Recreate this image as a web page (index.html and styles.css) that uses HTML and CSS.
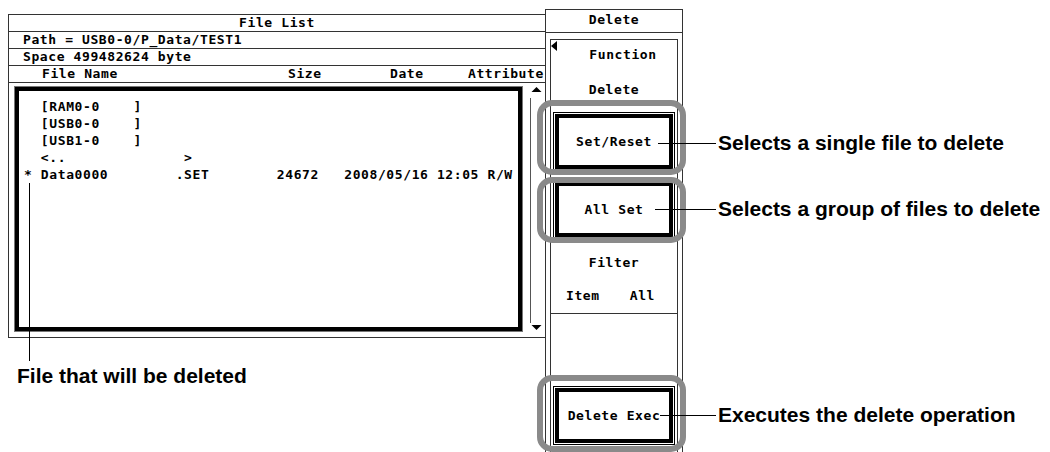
FILE: index.html
```html
<!DOCTYPE html>
<html>

<head>
    <link rel="stylesheet" href="styles.css">
</head>

<body>

    <div class="screen">

        <div class="file-panel">
            <div class="row row-title">File List</div>
            <div class="row row-info">Path = USB0-0/P_Data/TEST1</div>
            <div class="row row-info">Space 499482624 byte</div>
            <div class="row row-head">
                <span class="c-name">File Name</span>
                <span class="c-size">Size</span>
                <span class="c-date">Date</span>
                <span class="c-attr">Attribute</span>
            </div>
            <div class="list-area">
                <div class="list-box">
<pre class="list">  [RAM0-0    ]
  [USB0-0    ]
  [USB1-0    ]
  &lt;..              &gt;
* Data0000        .SET        24672   2008/05/16 12:05 R/W</pre>
                </div>
                <svg class="scroll" width="22" height="254" viewBox="0 0 22 254">
                    <polygon points="8.5,9 13.5,4 18.5,9" fill="#000" />
                    <line x1="7.5" y1="15" x2="7.5" y2="240" stroke="#555" stroke-width="1" />
                    <polygon points="8.5,242 18.5,242 13.5,247" fill="#000" />
                </svg>
            </div>
        </div>

        <div class="menu">
            <div class="menu-title">Delete</div>
            <div class="keys">
                <div class="key key-fn">
                    <span class="mark"></span>
                    <div class="fn-label">Function</div>
                    <div class="fn-value">Delete</div>
                </div>
                <div class="key key-btn">
                    <div class="soft-btn">Set/Reset</div>
                </div>
                <div class="key key-btn">
                    <div class="soft-btn">All Set</div>
                </div>
                <div class="key key-filter">
                    <div class="fn-label-c">Filter</div>
                    <div class="item-row"><span>Item</span><span>All</span></div>
                </div>
                <div class="key"></div>
                <div class="key key-btn">
                    <div class="soft-btn">Delete Exec</div>
                </div>
            </div>
        </div>

        <!-- callouts -->
        <div class="ring ring-set"></div>
        <div class="ring ring-all"></div>
        <div class="ring ring-exec"></div>

        <div class="lead lead-set"></div>
        <div class="lead lead-all"></div>
        <div class="lead lead-exec"></div>
        <div class="lead-v"></div>

        <div class="note note-set">Selects a single file to delete</div>
        <div class="note note-all">Selects a group of files to delete</div>
        <div class="note note-exec">Executes the delete operation</div>
        <div class="note note-file">File that will be deleted</div>

    </div>

</body>

</html>
```

FILE: styles.css
```css
body {
    margin: 0;
    background-color: #fff;
}

.screen {
    position: relative;
    display: flex;
    align-items: flex-start;
    width: 1050px;
    height: 452px;
    padding: 9px 0 0 8px;
    box-sizing: border-box;
    overflow: hidden;
    font-family: "DejaVu Sans Mono", "Liberation Mono", monospace;
    font-weight: bold;
    font-size: 13px;
    letter-spacing: 0.6px;
    color: #000;
}

/* left: file list */
.file-panel {
    width: 537px;
    margin-top: 5px;
    border: 1px solid #333;
    border-right: none;
    box-sizing: border-box;
}

.row {
    height: 17px;
    line-height: 16px;
    border-bottom: 1px solid #333;
    box-sizing: border-box;
    white-space: pre;
}

.row-title {
    text-align: center;
}

.row-info {
    padding-left: 14px;
}

.row-head {
    display: flex;
    padding-left: 33px;
}

.c-name {
    width: 246px;
}

.c-size {
    width: 102px;
}

.c-date {
    width: 78px;
}

.list-area {
    display: flex;
    height: 254px;
}

.list-box {
    width: 507px;
    height: 244px;
    margin: 4px 1px 0 6px;
    border: 4px solid #000;
    box-sizing: border-box;
    box-shadow: 0 0 0 1px #777;
}

.list {
    margin: 0;
    padding: 7px 0 0 5px;
    font: inherit;
    line-height: 17px;
}

.scroll {
    display: block;
    flex: none;
}

/* right: soft key menu */
.menu {
    width: 138px;
    height: 460px;
    border: 1px solid #333;
    border-bottom: none;
    box-sizing: border-box;
}

.menu-title {
    height: 23px;
    line-height: 20px;
    text-align: center;
    border-bottom: 1px solid #333;
    box-sizing: border-box;
}

.keys {
    height: 430px;
    margin: 6px 4px 0;
    border: 1px solid #333;
    border-bottom: none;
}

.key {
    height: 68.5px;
    box-sizing: border-box;
    position: relative;
}

.key-btn {
    padding-top: 5px;
}

.key-fn {
    padding-top: 6px;
    line-height: 17px;
}

.mark {
    position: absolute;
    left: 0;
    top: 1px;
    border-right: 6px solid #000;
    border-top: 5px solid transparent;
    border-bottom: 5px solid transparent;
}

.fn-label {
    text-align: center;
    padding-left: 18px;
}

.fn-value {
    text-align: center;
    margin-top: 18px;
}

.key-filter {
    padding-top: 8px;
    line-height: 17px;
    border-bottom: 1px solid #333;
}

.fn-label-c {
    text-align: center;
}

.item-row {
    display: flex;
    justify-content: space-between;
    margin-top: 16px;
    padding: 0 22px 0 15px;
}

.soft-btn {
    display: flex;
    align-items: center;
    justify-content: center;
    height: 55px;
    margin: 0 4px;
    border: 4px solid #000;
    box-sizing: border-box;
    box-shadow: 0 0 0 1px #fff, 0 0 0 2px #000;
    white-space: pre;
}

/* annotation overlays */
.ring {
    position: absolute;
    left: 537px;
    width: 149px;
    border: 6px solid #8a8a8a;
    border-radius: 15px;
    box-sizing: border-box;
}

.ring-set {
    top: 100px;
    height: 75px;
}

.ring-all {
    top: 177px;
    height: 66px;
}

.ring-exec {
    top: 375px;
    height: 77px;
}

.lead {
    position: absolute;
    height: 1px;
    background-color: #000;
}

.lead-set {
    left: 658px;
    top: 143px;
    width: 58px;
}

.lead-all {
    left: 655px;
    top: 209px;
    width: 61px;
}

.lead-exec {
    left: 660px;
    top: 415px;
    width: 56px;
}

.lead-v {
    position: absolute;
    left: 29px;
    top: 183px;
    width: 1px;
    height: 178px;
    background-color: #000;
}

.note {
    position: absolute;
    font-family: "Liberation Sans", Arial, sans-serif;
    font-weight: bold;
    font-size: 21px;
    line-height: 24px;
    letter-spacing: 0;
    white-space: nowrap;
}

.note-set {
    left: 718px;
    top: 131px;
}

.note-all {
    left: 718px;
    top: 197px;
}

.note-exec {
    left: 718px;
    top: 403px;
}

.note-file {
    left: 17px;
    top: 364px;
}
```
